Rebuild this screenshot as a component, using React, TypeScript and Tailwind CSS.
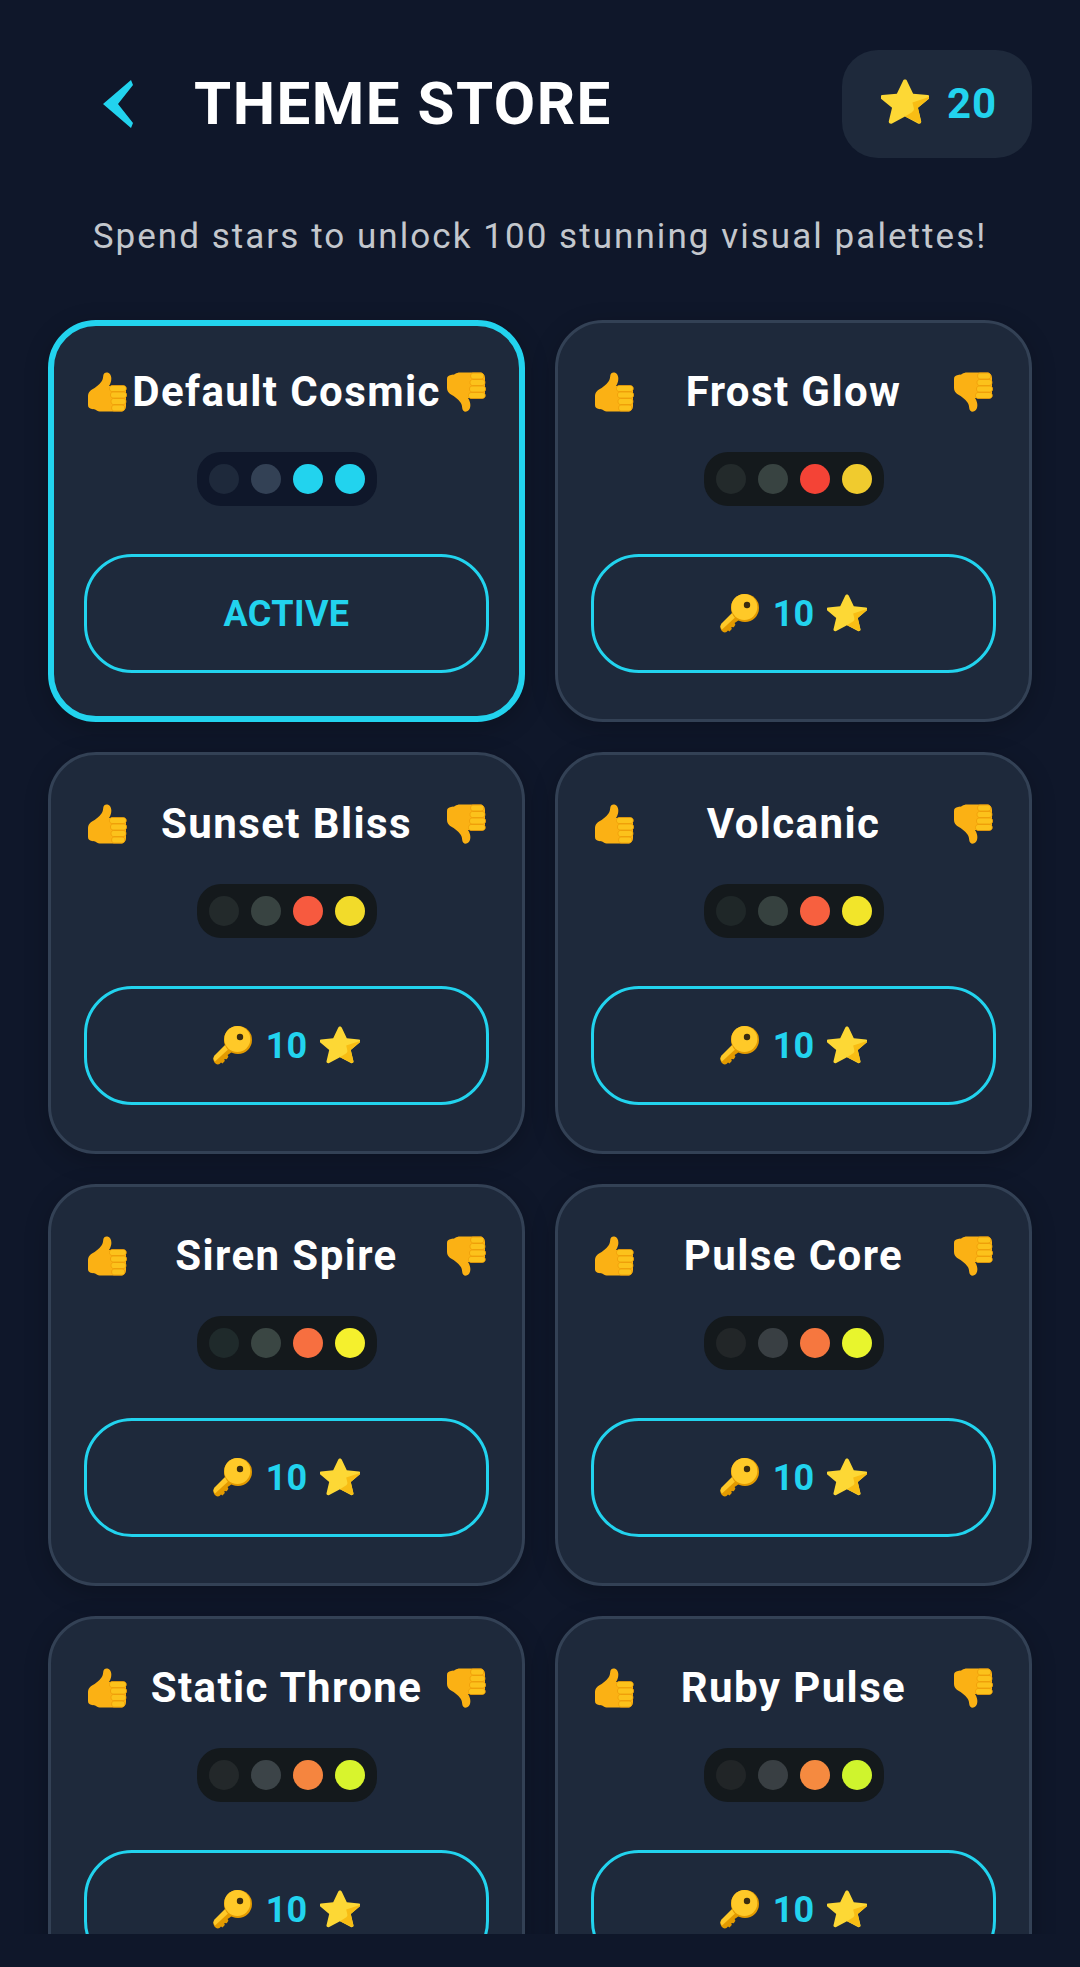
import React from "react";

const Star = ({ s = 40, className = "" }: { s?: number; className?: string }) => (
  <svg width={s} height={s * 0.96} viewBox="0 0 40 41.500" preserveAspectRatio="none" className={"shrink-0 " + className}>
    <path d="M20 .5c.8 0 1.400.5 1.700 1.200l5.100 11.600 12.200 1.200c1.600.2 2.200 2.100 1 3.200l-9.200 8.200 2.700 12.200c.3 1.500-1.300 2.700-2.700 1.900L20 33.700 9.200 40c-1.400.8-3-.4-2.700-1.900l2.700-12.200L0 17.700c-1.200-1.100-.6-3 1-3.200l12.200-1.200 5.100-11.600C18.600 1 19.200.5 20 .5z" fill="#fdd835" />
    <path d="M40 16.300c.3.500.1 1-.3 1.400l-9 8.200 2.600 12.200c.2.900-.2 1.600-.9 2L20 33.700l5.500-3.600c1.600-1.100 2.200-2.300 1.800-4l-1.100-5z" fill="#f8bd14" />
  </svg>
);

const Key = ({ s = 40 }: { s?: number }) => (
  <svg width={s} height={s} viewBox="0 0 40 40" className="shrink-0">
    <path d="M16 16L2 30c-2 2-2 4-.5 6.500C3 38.500 5 39 6.500 38L8 36.500l1.500 1 2.300-2.500-.5-2 2.500.2 1.600-2.500-.8-1.700L25 22z" fill="#e39a00" />
    <path d="M16 15L1.500 29.500c-1.800 2.300-1 4.500.5 6L20 19z" fill="#ffc928" />
    <circle cx="25" cy="14" r="14" fill="#e39a00" />
    <circle cx="24.300" cy="13" r="13" fill="#ffc928" />
    <circle cx="27" cy="11" r="3.200" fill="#3a2c10" />
  </svg>
);

const Thumb = ({ s = 40, down = false }: { s?: number; down?: boolean }) => (
  <svg width={s} height={s} viewBox="0 0 40 40" className={down ? "shrink-0 -scale-y-100" : "shrink-0"}>
    <path d="M1 24c0-3 1.500-5 4-6.500 3.500-2 7-4.500 9.500-8 1.500-2 1.500-4 1.800-6C16.600 1 18.500 0 20.500.5c3.500 1 4.500 5 3.500 9-.4 1.800-1.200 3.300-2 4.500h13c2.500 0 4 2 4 4v16c0 3-2 5.500-5 5.500H14c-2 0-3.500-.5-5-1.500-1.300-.8-2.500-.8-4-1-2.500-.3-4-1.500-4-4z" fill="#fbb114" />
    <path d="M25 13.500h11c2 0 3.300 1.200 3.300 3s-1.300 3-3.300 3H25c-1.500 0-2.500-1.300-2.500-3s1-3 2.500-3zM26 20h10.500c2 0 3.200 1.300 3.200 3s-1.200 3-3.200 3H26c-1.600 0-2.500-1.300-2.500-3S24.400 20 26 20zM26.500 26.500H36c1.900 0 3 1.300 3 3s-1.100 3-3 3h-9.500c-1.500 0-2.500-1.300-2.500-3s1-3 2.500-3zM27 33h8c1.700 0 2.800 1.200 2.800 2.900S36.700 39 35 39h-8c-1.500 0-2.400-1.300-2.400-3s.9-3 2.400-3z" fill="#fcc21b" stroke="#ed9c09" strokeWidth="0.8" />
  </svg>
);

type Theme = { name: string; pill: string; dots: string[]; active?: boolean };

const themes: Theme[] = [
  { name: "Default Cosmic", pill: "bg-[#0f172a]", dots: ["bg-[#1e293b]", "bg-[#334155]", "bg-[#22d3ee]", "bg-[#22d3ee]"], active: true },
  { name: "Frost Glow", pill: "bg-[#14191c]", dots: ["bg-[#232a2b]", "bg-[#384341]", "bg-[#f44336]", "bg-[#f0cb2e]"] },
  { name: "Sunset Bliss", pill: "bg-[#14191c]", dots: ["bg-[#232a2b]", "bg-[#384341]", "bg-[#f75a3f]", "bg-[#f2db2a]"] },
  { name: "Volcanic", pill: "bg-[#14191c]", dots: ["bg-[#1f2728]", "bg-[#36413f]", "bg-[#f7603f]", "bg-[#f2e52a]"] },
  { name: "Siren Spire", pill: "bg-[#14191c]", dots: ["bg-[#1f2a2b]", "bg-[#3a4643]", "bg-[#f76f40]", "bg-[#f5f02d]"] },
  { name: "Pulse Core", pill: "bg-[#14191c]", dots: ["bg-[#222628]", "bg-[#393f43]", "bg-[#f6773f]", "bg-[#e8f52d]"] },
  { name: "Static Throne", pill: "bg-[#14191c]", dots: ["bg-[#23282a]", "bg-[#3c4448]", "bg-[#f5853f]", "bg-[#d8f42d]"] },
  { name: "Ruby Pulse", pill: "bg-[#14191c]", dots: ["bg-[#212527]", "bg-[#393f43]", "bg-[#f58a40]", "bg-[#cff42d]"] },
];

const Card = ({ t }: { t: Theme }) => (
  <div
    className={
      "flex h-[402px] flex-col items-center rounded-[48px] bg-[#1e293b] shadow-[0_6px_24px_rgba(0,0,0,0.22)] " +
      (t.active ? "border-[6px] border-[#22d3ee] px-[30px] pt-[46px]" : "border-[3px] border-[#334155] px-[33px] pt-[49px]")
    }
  >
    <div className="flex h-[40px] w-full items-center justify-between px-[3px]">
      <Thumb />
      <span className="text-[42px] leading-[40px] font-bold tracking-[1.4px] whitespace-nowrap text-white">{t.name}</span>
      <Thumb down />
    </div>
    <div className={"mt-[40px] flex h-[54px] items-center gap-3 rounded-[24px] px-3 " + t.pill}>
      {t.dots.map((d, i) => (
        <div key={i} className={"h-[30px] w-[30px] rounded-full " + d} />
      ))}
    </div>
    <div className="mt-[48px] flex h-[119px] w-full items-center justify-center gap-[13px] rounded-[48px] border-[3px] border-[#22d3ee]">
      {t.active ? (
        <span className="text-[36px] font-bold tracking-[0.4px] text-[#22d3ee]">ACTIVE</span>
      ) : (
        <>
          <Key />
          <span className="text-[36px] leading-[40px] font-bold text-[#22d3ee]">10</span>
          <Star />
        </>
      )}
    </div>
  </div>
);

export default function App() {
  return (
    <div className="flex h-[1967px] w-[1080px] flex-col bg-[#0f172a] font-['Roboto',sans-serif]">
      <header className="mt-[50px] flex h-[108px] shrink-0 items-center justify-between pr-[48px] pl-[98px]">
        <div className="flex items-center gap-[56px]">
          <svg width="40" height="48" viewBox="0 0 40 48" className="shrink-0">
            <polygon points="33,0 35,5 20,24 35,43 33,48 5,24" fill="#22d3ee" />
          </svg>
          <h1 className="text-[60px] leading-none font-bold tracking-[1.5px] text-white">THEME STORE</h1>
        </div>
        <div className="flex h-[108px] w-[190px] items-center gap-[18px] rounded-[36px] bg-[#1e293b] pl-[39px]">
          <Star s={48} className="-mt-[3px]" />
          <span className="text-[42px] leading-none font-bold tracking-[1px] text-[#22d3ee]">20</span>
        </div>
      </header>
      <p className="mt-[59px] text-center text-[35px] leading-[40px] tracking-[2.05px] whitespace-nowrap text-[#c3c7cd]">
        Spend stars to unlock 100 stunning visual palettes!
      </p>
      <main className="mt-[23px] h-[1654px] overflow-hidden px-[48px] pt-[40px]">
        <div className="grid grid-cols-2 gap-[30px]">
          {themes.map((t) => (
            <Card key={t.name} t={t} />
          ))}
        </div>
      </main>
    </div>
  );
}
